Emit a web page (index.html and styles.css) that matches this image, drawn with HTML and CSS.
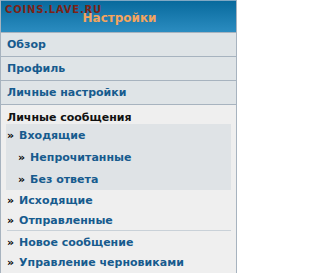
FILE: index.html
```html
<!DOCTYPE html>
<html lang="ru">
<head>
<meta charset="utf-8">
<link rel="stylesheet" href="styles.css">
</head>
<body>
<div class="panel">
  <div class="head">
    <span class="title">Настройки</span>
    <span class="mark">COINS.LAVE.RU</span>
  </div>
  <a class="row" href="#">Обзор</a>
  <a class="row" href="#">Профиль</a>
  <a class="row" href="#">Личные настройки</a>
  <div class="section">
    <div class="sec-title">Личные сообщения</div>
    <div class="active">
      <a class="item" href="#"><span class="raq">»</span>Входящие</a>
      <a class="item sub" href="#"><span class="raq">»</span>Непрочитанные</a>
      <a class="item sub" href="#"><span class="raq">»</span>Без ответа</a>
    </div>
    <a class="item" href="#"><span class="raq">»</span>Исходящие</a>
    <a class="item" href="#"><span class="raq">»</span>Отправленные</a>
    <div class="sep"></div>
    <a class="item" href="#"><span class="raq">»</span>Новое сообщение</a>
    <a class="item" href="#"><span class="raq">»</span>Управление черновиками</a>
  </div>
</div>
</body>
</html>
```
FILE: styles.css
```css
html, body {
  margin: 0;
  padding: 0;
  background: #ffffff;
}
body {
  font-family: "DejaVu Sans", Verdana, sans-serif;
  font-size: 11px;
  font-weight: bold;
}
.panel {
  width: 235px;
  height: 273px;
  border-left: 1px solid #a7b3bf;
  border-right: 1px solid #a7b3bf;
  background: #efefef;
  display: flex;
  flex-direction: column;
}
.head {
  position: relative;
  height: 31px;
  border-top: 1px solid #7fa8c4;
  border-bottom: 1px solid #a7b3bf;
  background: linear-gradient(#086a9d, #2b8cc0);
  display: flex;
  align-items: center;
  justify-content: center;
}
.title {
  color: #f3a45e;
  font-size: 12px;
  padding-left: 2px;
  margin-top: 2px;
}
.mark {
  position: absolute;
  left: 4px;
  top: 3px;
  color: #7c2216;
  font-size: 10px;
  letter-spacing: 0.8px;
}
.row {
  display: flex;
  align-items: center;
  height: 23px;
  padding-left: 6px;
  border-bottom: 1px solid #a7b3bf;
  background: #dfe4e7;
  color: #175b8e;
  text-decoration: none;
}
.section {
  padding: 0 5px 0 6px;
}
.sec-title {
  height: 19px;
  display: flex;
  align-items: flex-end;
  color: #111111;
}
.active {
  background: #dfe3e6;
  margin-left: -1px;
  padding-left: 1px;
}
.item {
  display: flex;
  align-items: center;
  height: 20px;
  color: #175b8e;
  text-decoration: none;
}
.active .item {
  height: 22px;
}
.item.sub {
  padding-left: 11px;
}
.raq {
  color: #000000;
  margin-right: 5px;
}
.sep {
  height: 1px;
  background: #c9d1d8;
  margin: 0 0 1px 0;
}
```
